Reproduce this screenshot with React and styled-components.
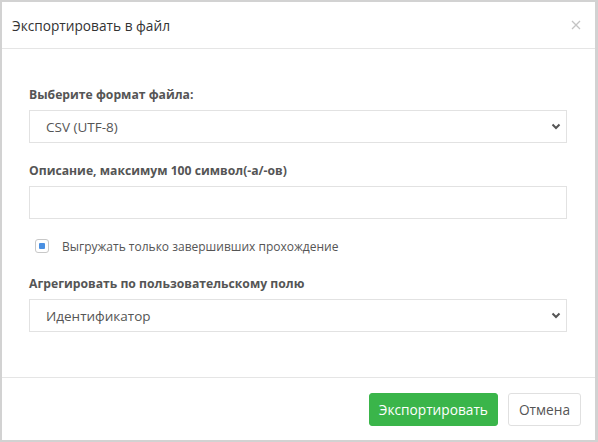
import React from "react";
import styled, { createGlobalStyle } from "styled-components";

const Global = createGlobalStyle`
  html, body { margin: 0; padding: 0; }
  body { background: #d2d2d2; font-family: "Open Sans", "Noto Sans", sans-serif; }
  * { box-sizing: border-box; }
`;

const Frame = styled.div`
  width: 598px;
  height: 442px;
  padding: 2px 3px 2px 2px;
  background: #d2d2d2;
`;

const Modal = styled.div`
  width: 100%;
  height: 100%;
  background: #fff;
  display: flex;
  flex-direction: column;
`;

const Header = styled.div`
  height: 47px;
  display: flex;
  align-items: center;
  justify-content: space-between;
  padding: 0 12px 0 10px;
  border-bottom: 1px solid #e5e5e5;
`;

const Title = styled.h4`
  margin: 0;
  font-size: 13.7px;
  font-weight: 400;
  color: #333;
`;

const Close = styled.button`
  border: 0;
  background: none;
  padding: 0;
  width: 14px;
  height: 14px;
  display: flex;
  align-items: center;
  justify-content: center;
  cursor: pointer;
`;

const Body = styled.div`
  flex: 1;
  padding: 37px 28px 0 27px;
  display: flex;
  flex-direction: column;
`;

const Group = styled.div`
  display: flex;
  flex-direction: column;
  margin-bottom: ${(p) => p.$mb || 0}px;
`;

const Label = styled.label`
  font-size: 12.2px;
  font-weight: 700;
  color: #555;
  line-height: 18px;
  margin-bottom: 6px;
`;

const SelectWrap = styled.div`
  position: relative;
  height: 33px;
`;

const Select = styled.select`
  appearance: none;
  -webkit-appearance: none;
  width: 100%;
  height: 33px;
  border: 1px solid #e2e2e2;
  border-radius: 0;
  background: #fff;
  padding: 0 30px 0 16px;
  font-family: inherit;
  font-size: 13.5px;
  color: #555;
  outline: none;
`;

const Chevron = styled.svg`
  position: absolute;
  right: 6px;
  top: 13px;
  pointer-events: none;
`;

const Input = styled.input`
  width: 100%;
  height: 33px;
  border: 1px solid #e2e2e2;
  padding: 0 16px;
  font-family: inherit;
  font-size: 14px;
  outline: none;
`;

const CheckRow = styled.label`
  display: flex;
  align-items: center;
  gap: 13px;
  padding-left: 6px;
  height: 18px;
  margin: 1px 0 20px;
  font-size: 12px;
  color: #555;
`;

const Box = styled.span`
  width: 14px;
  height: 14px;
  border: 1px solid #c8c8c8;
  border-radius: 3px;
  display: flex;
  align-items: center;
  justify-content: center;
  &::after {
    content: "";
    width: 6px;
    height: 6px;
    border-radius: 1px;
    background: #4a90e2;
  }
`;

const Footer = styled.div`
  height: 63px;
  border-top: 1px solid #e5e5e5;
  display: flex;
  align-items: flex-start;
  justify-content: flex-end;
  gap: 10px;
  padding: 15px 14px 0 0;
`;

const Button = styled.button`
  height: 33px;
  padding: 0 ${(p) => (p.$primary ? 9 : 10)}px;
  border-radius: 3px;
  font-family: inherit;
  font-size: 13.7px;
  border: 1px solid ${(p) => (p.$primary ? "#3ab54a" : "#e0e0e0")};
  background: ${(p) => (p.$primary ? "#3ab54a" : "#fff")};
  color: ${(p) => (p.$primary ? "#fff" : "#555")};
  cursor: pointer;
`;

const ChevronIcon = () => (
  <Chevron width="10" height="8" viewBox="0 0 10 8">
    <path d="M1.5 1.5 L5 5 L8.5 1.5" fill="none" stroke="#555" strokeWidth="2" />
  </Chevron>
);

export default function App() {
  return (
    <>
      <Global />
      <Frame>
        <Modal>
          <Header>
            <Title>Экспортировать в файл</Title>
            <Close aria-label="Закрыть">
              <svg width="10" height="10" viewBox="0 0 10 10">
                <path d="M1 1 L9 9 M9 1 L1 9" stroke="#c4c4c4" strokeWidth="1.3" />
              </svg>
            </Close>
          </Header>
          <Body>
            <Group $mb={19}>
              <Label>Выберите формат файла:</Label>
              <SelectWrap>
                <Select defaultValue="csv">
                  <option value="csv">CSV (UTF-8)</option>
                </Select>
                <ChevronIcon />
              </SelectWrap>
            </Group>
            <Group $mb={17}>
              <Label>Описание, максимум 100 символ(-а/-ов)</Label>
              <Input type="text" />
            </Group>
            <CheckRow>
              <Box />
              Выгружать только завершивших прохождение
            </CheckRow>
            <Group>
              <Label>Агрегировать по пользовательскому полю</Label>
              <SelectWrap>
                <Select defaultValue="id">
                  <option value="id">Идентификатор</option>
                </Select>
                <ChevronIcon />
              </SelectWrap>
            </Group>
          </Body>
          <Footer>
            <Button $primary>Экспортировать</Button>
            <Button>Отмена</Button>
          </Footer>
        </Modal>
      </Frame>
    </>
  );
}
